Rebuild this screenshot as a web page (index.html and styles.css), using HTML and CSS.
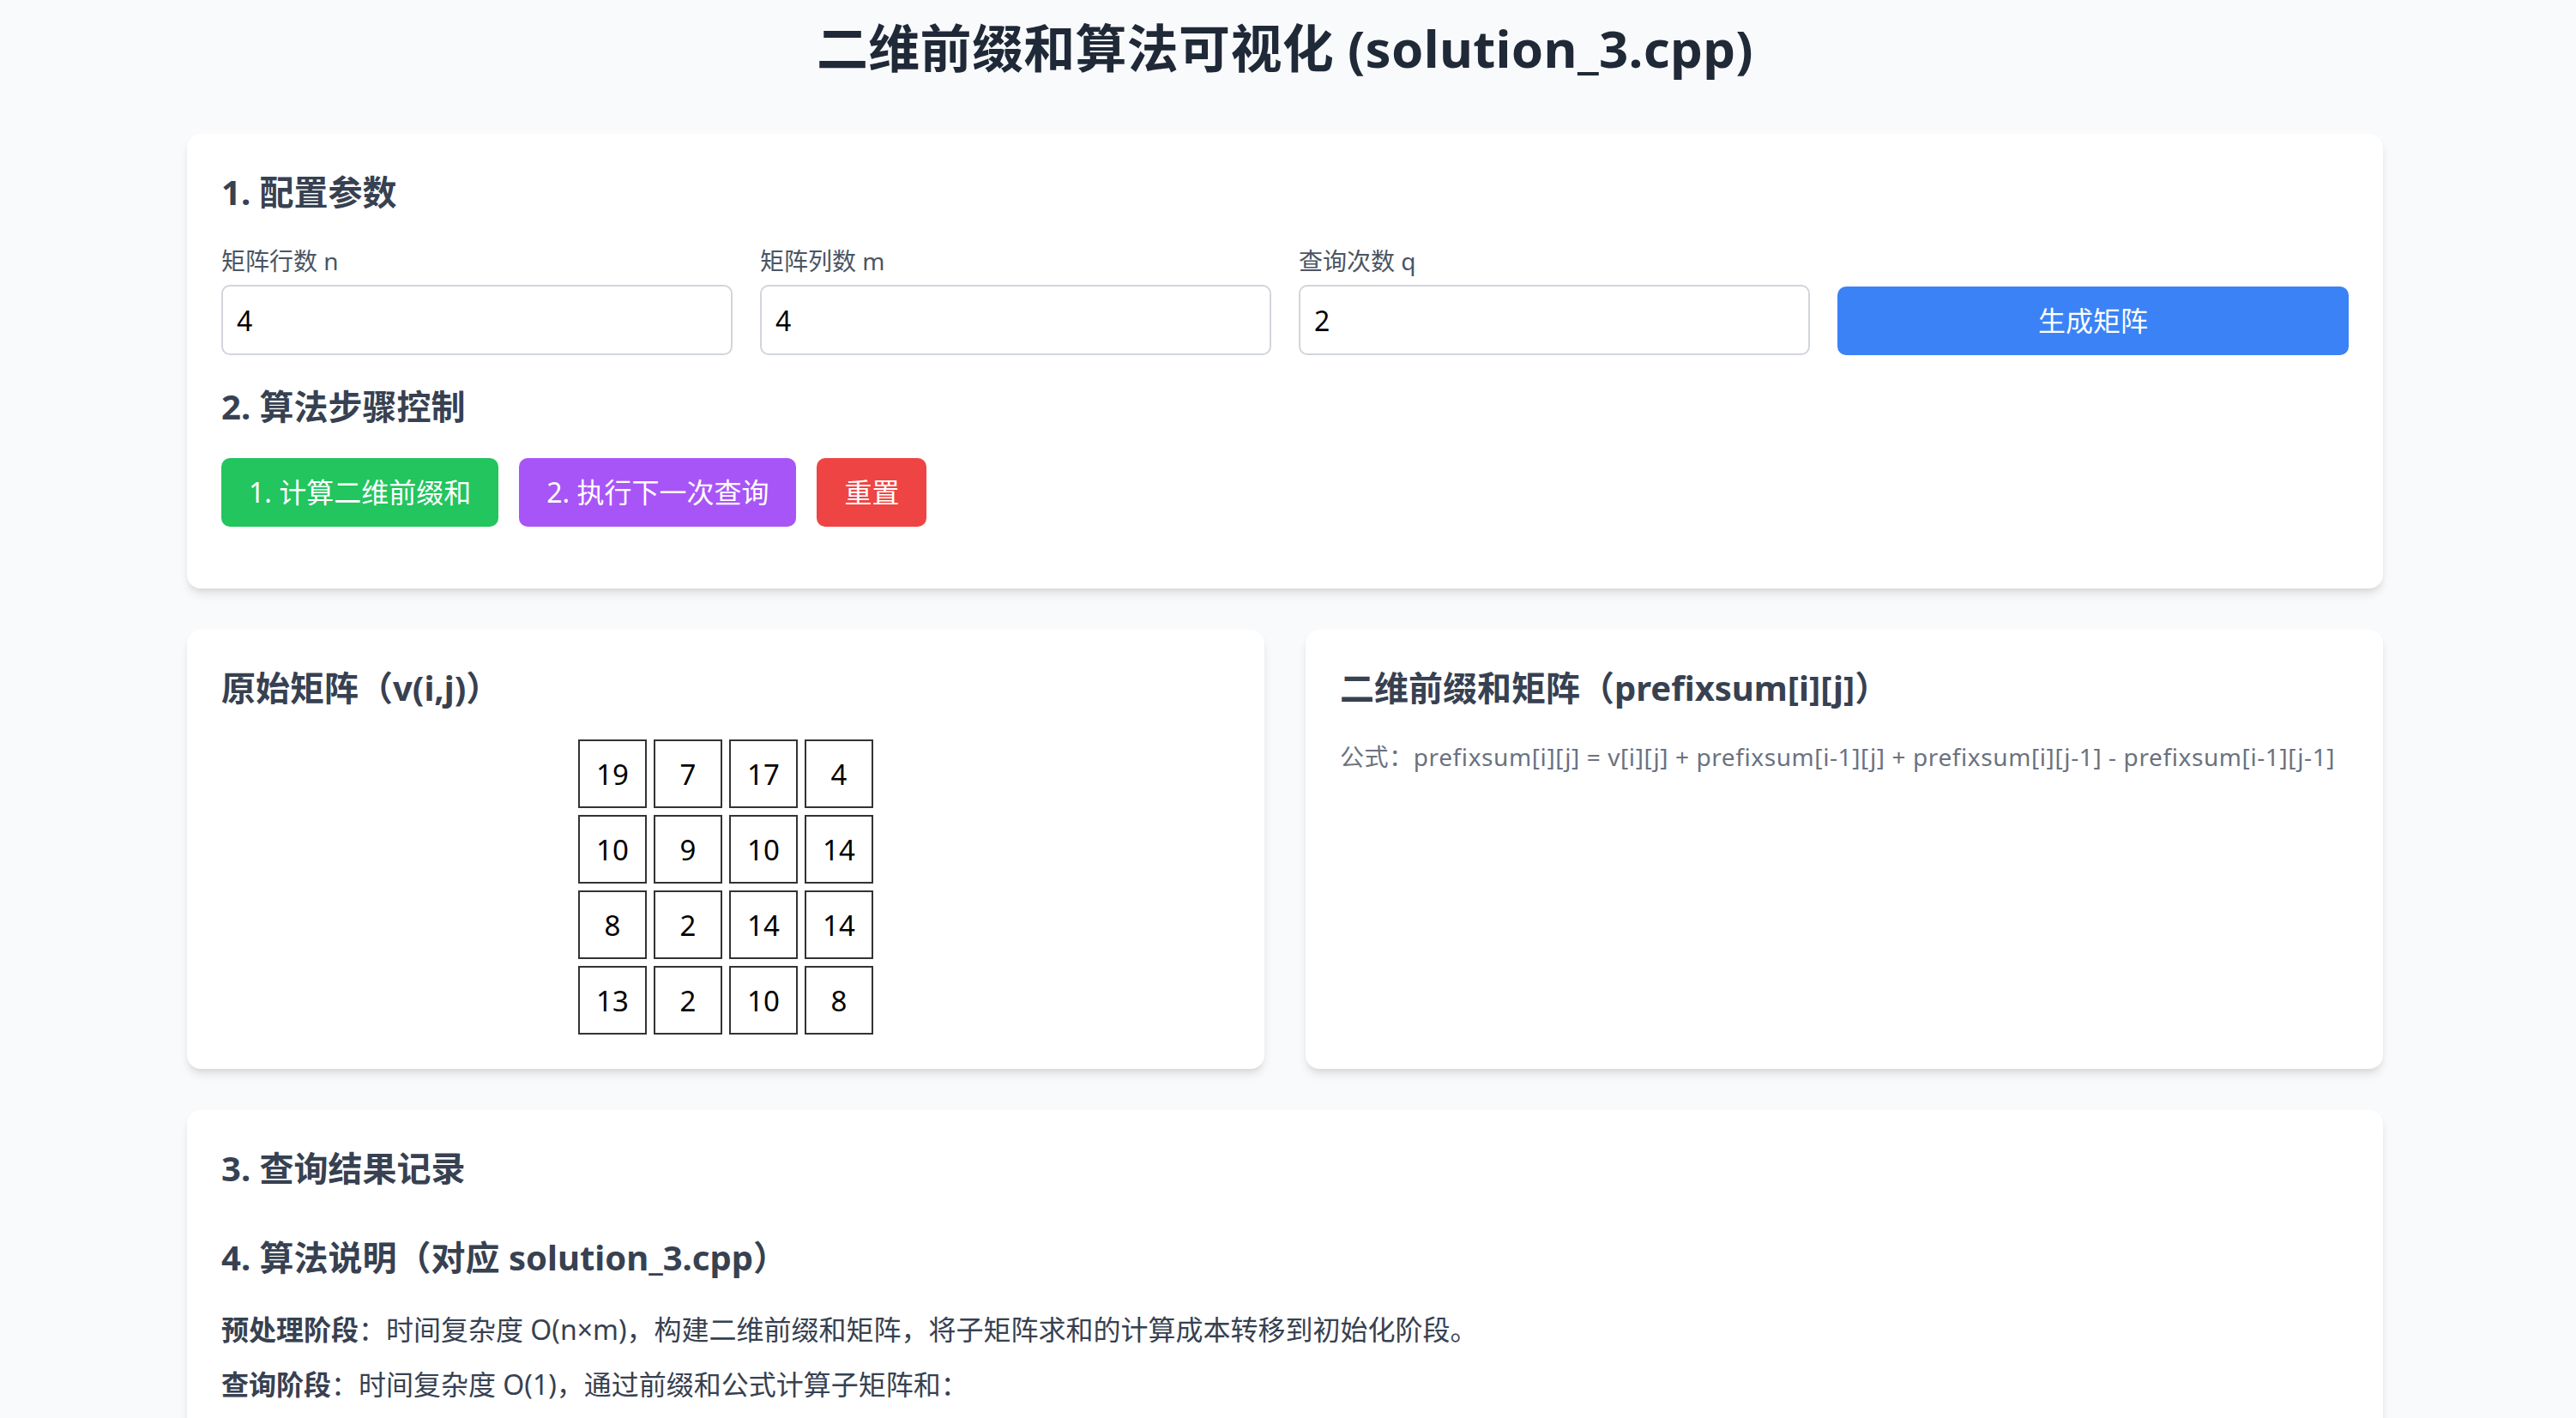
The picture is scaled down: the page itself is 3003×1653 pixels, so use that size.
FILE: index.html
```html
<!DOCTYPE html>
<html lang="zh-CN">
<head>
<meta charset="utf-8">
<title>二维前缀和算法可视化</title>
<link rel="stylesheet" href="styles.css">
</head>
<body>
<div class="page">
  <h1 class="title">二维前缀和算法可视化 (solution_3.cpp)</h1>

  <section class="card">
    <h2 class="card-title">1. 配置参数</h2>
    <div class="config-grid">
      <div class="field">
        <label class="field-label">矩阵行数 n</label>
        <input class="field-input" type="text" value="4">
      </div>
      <div class="field">
        <label class="field-label">矩阵列数 m</label>
        <input class="field-input" type="text" value="4">
      </div>
      <div class="field">
        <label class="field-label">查询次数 q</label>
        <input class="field-input" type="text" value="2">
      </div>
      <button class="btn btn-blue btn-full">生成矩阵</button>
    </div>
    <h2 class="card-title">2. 算法步骤控制</h2>
    <div class="btn-row">
      <button class="btn btn-green">1. 计算二维前缀和</button>
      <button class="btn btn-purple">2. 执行下一次查询</button>
      <button class="btn btn-red">重置</button>
    </div>
  </section>

  <div class="matrix-row">
    <section class="card">
      <h2 class="card-title">原始矩阵（v(i,j)）</h2>
      <div class="matrix">
        <div class="cell">19</div><div class="cell">7</div><div class="cell">17</div><div class="cell">4</div>
        <div class="cell">10</div><div class="cell">9</div><div class="cell">10</div><div class="cell">14</div>
        <div class="cell">8</div><div class="cell">2</div><div class="cell">14</div><div class="cell">14</div>
        <div class="cell">13</div><div class="cell">2</div><div class="cell">10</div><div class="cell">8</div>
      </div>
    </section>
    <section class="card">
      <h2 class="card-title">二维前缀和矩阵（prefixsum[i][j]）</h2>
      <p class="formula">公式：prefixsum[i][j] = v[i][j] + prefixsum[i-1][j] + prefixsum[i][j-1] - prefixsum[i-1][j-1]</p>
    </section>
  </div>

  <section class="card card-results">
    <h2 class="card-title">3. 查询结果记录</h2>
    <div class="results"></div>
    <div class="explain">
      <h2 class="card-title">4. 算法说明（对应 solution_3.cpp）</h2>
      <p class="explain-text"><strong>预处理阶段</strong>：时间复杂度 O(n×m)，构建二维前缀和矩阵，将子矩阵求和的计算成本转移到初始化阶段。</p>
      <p class="explain-text"><strong>查询阶段</strong>：时间复杂度 O(1)，通过前缀和公式计算子矩阵和：</p>
    </div>
  </section>
</div>
</body>
</html>
```

FILE: styles.css
```css
* { box-sizing: border-box; }

html, body {
  margin: 0;
  padding: 0;
  background: #f9fafb;
}

body {
  font-family: "Noto Sans", "Noto Sans CJK SC", sans-serif;
  color: #374151;
  padding-right: 7px;
}

.page {
  max-width: 2560px;
  margin: 0 auto;
  padding-top: 20px;
}

.title {
  margin: 0 0 64px;
  font-size: 60px;
  line-height: 72px;
  font-weight: 700;
  color: #1f2937;
  text-align: center;
  letter-spacing: 0.3px;
}

.card {
  background: #ffffff;
  border-radius: 16px;
  padding: 40px;
  box-shadow: 0 8px 12px -2px rgba(0, 0, 0, 0.1), 0 4px 8px -4px rgba(0, 0, 0, 0.1);
}

.card-title {
  margin: 0 0 32px;
  font-size: 40px;
  line-height: 56px;
  font-weight: 700;
  color: #374151;
}

.config-grid {
  display: grid;
  grid-template-columns: repeat(4, 1fr);
  gap: 32px;
  align-items: end;
  margin-bottom: 32px;
}

.field-label {
  display: block;
  font-size: 28px;
  line-height: 40px;
  color: #4b5563;
  margin-bottom: 8px;
}

.field-input {
  display: block;
  width: 100%;
  height: 82px;
  padding: 0 16px;
  border: 2px solid #d1d5db;
  border-radius: 10px;
  font-family: inherit;
  font-size: 32px;
  color: #000;
  background: #fff;
  outline: none;
}

.btn {
  height: 80px;
  padding: 0 32px;
  border: none;
  border-radius: 10px;
  font-family: inherit;
  font-size: 32px;
  line-height: 48px;
  color: #ffffff;
  cursor: pointer;
}

.btn-full { width: 100%; }
.btn-blue { background: #3b82f6; }
.btn-green { background: #22c55e; }
.btn-purple { background: #a855f7; }
.btn-red { background: #ef4444; }

.btn-row {
  display: flex;
  gap: 24px;
  margin-bottom: 32px;
}

.matrix-row {
  display: grid;
  grid-template-columns: 1fr 1fr;
  gap: 48px;
  margin-top: 48px;
}

.matrix {
  display: grid;
  grid-template-columns: repeat(4, 80px);
  grid-auto-rows: 80px;
  gap: 8px;
  justify-content: center;
}

.cell {
  display: flex;
  align-items: center;
  justify-content: center;
  border: 2px solid #333333;
  font-size: 33px;
  color: #000;
}

.formula {
  margin: 0;
  font-size: 28px;
  line-height: 40px;
  color: #6b7280;
  letter-spacing: 0.6px;
}

.card-results {
  margin-top: 48px;
  min-height: 400px;
}

.explain {
  margin-top: 48px;
}

.explain-text {
  margin: 0 0 16px;
  font-size: 32px;
  line-height: 48px;
  color: #374151;
}

.explain-text strong {
  font-weight: 700;
}
```
